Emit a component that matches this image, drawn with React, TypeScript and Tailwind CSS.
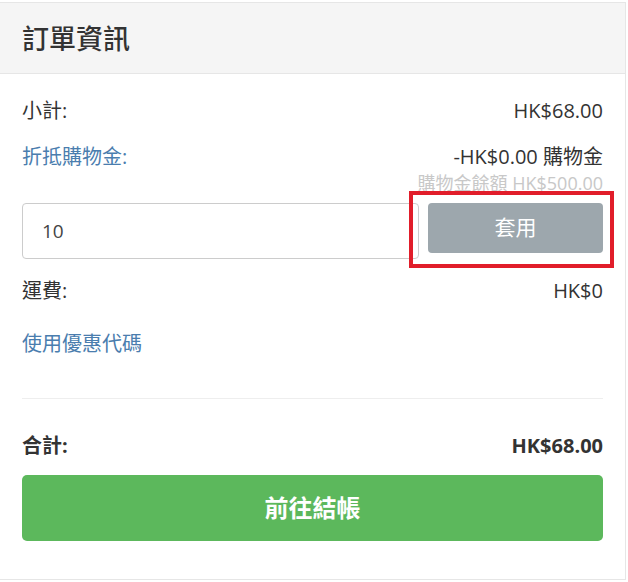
export default function App() {
  return (
    <div
      className="min-h-[582px] bg-white text-[#333]"
      style={{ fontFamily: '"Open Sans", "Noto Sans CJK TC", sans-serif' }}
    >
      <div className="ml-[-1px] mt-[2px] w-[627px] border border-[#e6e6e6]">
        <div className="flex h-[71px] items-center border-b border-[#e6e6e6] bg-[#f5f5f5] px-[22px]">
          <h2 className="text-[27px] font-medium leading-none">訂單資訊</h2>
        </div>

        <div className="px-[22px] pb-[38px]">
          <div className="mt-[24px] flex justify-between text-[20px] leading-[26px]">
            <span>小計:</span>
            <span>HK$68.00</span>
          </div>

          <div className="mt-[20px] flex justify-between text-[20px] leading-[26px]">
            <a className="text-[#4a7dae]">折抵購物金:</a>
            <span>-HK$0.00 購物金</span>
          </div>
          <div className="mt-[2px] text-right text-[18px] leading-[22px] text-[#c8c8c8]">
            購物金餘額 HK$500.00
          </div>

          <div className="relative mt-[9px] flex items-start">
            <input
              defaultValue="10"
              className="h-[56px] w-[397px] rounded-[4px] border border-[#cccccc] px-[19px] text-[19px] text-[#444] outline-none"
            />
            <button className="ml-auto h-[50px] w-[175px] rounded-[4px] bg-[#9da7ad] text-[21px] text-white">
              套用
            </button>
            <div className="pointer-events-none absolute left-[387px] top-[-12px] h-[77px] w-[205px] border-4 border-[#e11d2a]" />
          </div>

          <div className="mt-[19px] flex justify-between text-[20px] leading-[26px]">
            <span>運費:</span>
            <span>HK$0</span>
          </div>

          <div className="mt-[27px] text-[20px] leading-[26px]">
            <a className="text-[#4a7dae]">使用優惠代碼</a>
          </div>

          <div className="mt-[41px] border-t border-[#eeeeee]" />

          <div className="mt-[34px] flex justify-between text-[20px] font-bold leading-[26px]">
            <span>合計:</span>
            <span>HK$68.00</span>
          </div>

          <button className="mt-[16px] h-[66px] w-full rounded-[5px] bg-[#5cb85c] text-[24px] font-bold text-white">
            前往結帳
          </button>
        </div>
      </div>
    </div>
  );
}
